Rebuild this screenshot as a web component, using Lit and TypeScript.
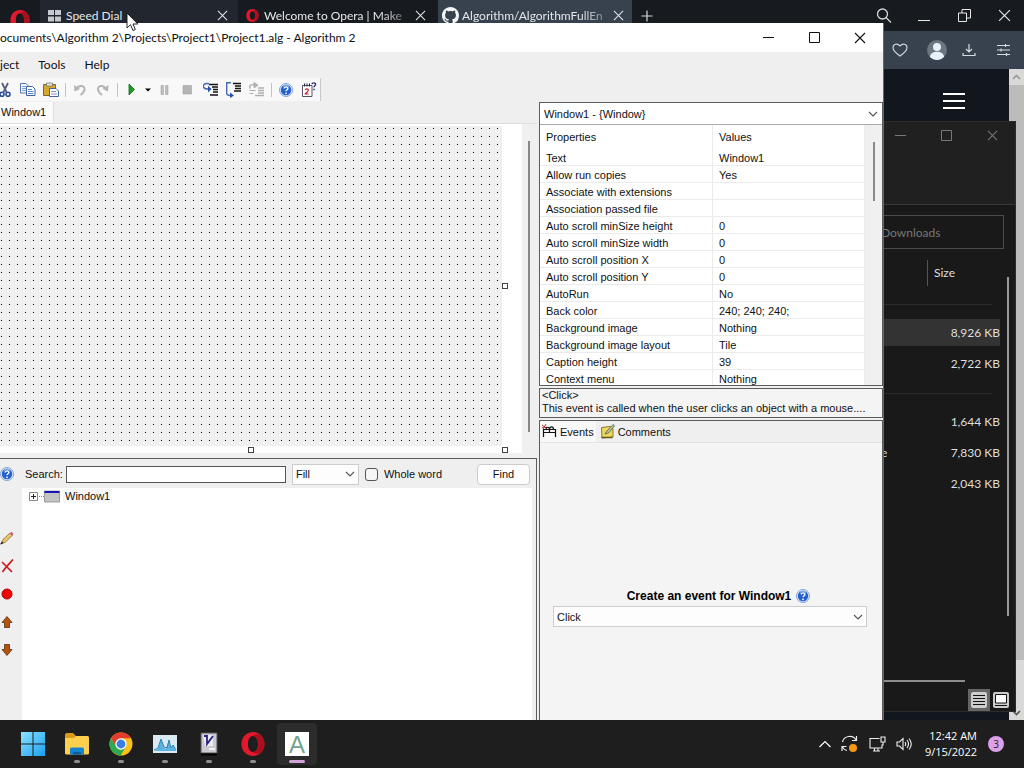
import { LitElement, html, css, nothing } from "lit";
import { customElement } from "lit/decorators.js";

const chevron = html`<svg class="chev" width="10" height="6" viewBox="0 0 10 6" fill="none" stroke="#555" stroke-width="1.1"><path d="M1 1l4 4 4-4" /></svg>`;

const cross = (size: number) => html`<svg width=${size} height=${size} viewBox="0 0 12 12" fill="none" stroke="currentColor" stroke-width="1.1"><path d="M1 1l10 10M11 1L1 11" /></svg>`;

const minimise = html`<svg width="11" height="11" viewBox="0 0 11 11"><path d="M0 5.5h11" stroke="currentColor" /></svg>`;
const maximise = html`<svg width="11" height="11" viewBox="0 0 11 11" fill="none" stroke="currentColor"><path d="M.5.5h10v10H.5z" /></svg>`;

const operaMark = (size: number) => html`<svg width=${size} height=${size} viewBox="0 0 24 24">
  <path fill="#e2182d" fill-rule="evenodd" d="M12 0C5.400 0 0.500 5.200 0.500 12S5.400 24 12 24s11.500-5.200 11.500-12S18.600 0 12 0zm0 4c2.900 0 5 3.400 5 8s-2.100 8-5 8-5-3.400-5-8 2.100-8 5-8z" />
  <path fill="#a8101f" d="M12 4c3 0 5 3.400 5 8s-2 8-5 8c2 2 5 2.500 7.500 1 2.500-2 4-5.400 4-9s-1.500-7-4-9C17 1.500 14 2 12 4z" />
</svg>`;

const helpIcon = html`<svg width="14" height="14" viewBox="0 0 14 14">
  <circle cx="7" cy="7" r="6.500" fill="#dfe9fb" stroke="#6c8fd0" stroke-width=".8" />
  <circle cx="7" cy="7" r="5.200" fill="#2560cf" />
  <path d="M4 3.500a4.500 4.500 0 0 1 6 0" stroke="#86b0f2" stroke-width="1.200" fill="none" />
  <path d="M5.200 5.600c0-2.300 3.800-2.200 3.700 0 0 1.200-1.800 1.200-1.900 2.600" stroke="#fff" stroke-width="1.400" fill="none" />
  <circle cx="7" cy="10.300" r=".9" fill="#fff" />
</svg>`;

const toolIcons: Record<string, unknown> = {
  cut: html`<svg width="16" height="16" viewBox="0 0 16 16" fill="none"><path d="M5 1l4.500 9M11 1L6.500 10" stroke="#55617c" stroke-width="1.800" /><circle cx="5" cy="12.300" r="2" stroke="#2c4c9b" stroke-width="1.600" /><circle cx="11" cy="12.300" r="2" stroke="#2c4c9b" stroke-width="1.600" /></svg>`,
  copy: html`<svg width="16" height="16" viewBox="0 0 16 16"><path d="M.5 1.500h5.500l2 2v7.500h-7.500z" fill="#f4f8ff" stroke="#5a78b4" /><path d="M2 4.500h4M2 6.500h4M2 8.500h4" stroke="#7fa0d8" /><path d="M6.500 4.500h6l2.500 2.500v6.500h-8.500z" fill="#fff" stroke="#40639f" /><path d="M8 7.500h4M8 9.500h5.500M8 11.500h5.500" stroke="#5a86cc" /></svg>`,
  paste: html`<svg width="16" height="16" viewBox="0 0 16 16"><path d="M.5 2.500h12v11H.5z" fill="#d7a82e" stroke="#7e6727" /><path d="M3.500 1h6v3h-6z" fill="#e9e5d2" stroke="#777" stroke-width=".8" /><path d="M6.500 6.500h6.500l2.500 2.500v5.500h-9z" fill="#fff" stroke="#4b64a0" /><path d="M8 9.500h5M8 12h6" stroke="#7391c8" /></svg>`,
  undo: html`<svg width="16" height="16" viewBox="0 0 16 16" fill="none"><path d="M4 7c3-4.500 9-3.500 8.500.5-.2 2.500-2 4-4 5.500" stroke="#b4b4b4" stroke-width="2" /><path d="M2 3l.5 6.500L8 7z" fill="#b4b4b4" /></svg>`,
  redo: html`<svg width="16" height="16" viewBox="0 0 16 16" fill="none"><path d="M11 7C8 2.500 2.500 3.500 3 7.500c.2 2.500 2 4 4 5.500" stroke="#b4b4b4" stroke-width="2" /><path d="M13.500 3L13 9.500 7.500 7z" fill="#b4b4b4" /></svg>`,
  run: html`<svg width="16" height="16" viewBox="0 0 16 16"><path d="M5 2l5.500 5.500L5 13z" fill="#1f9a2c" stroke="#0b6a16" stroke-width=".8" /></svg>`,
  pause: html`<svg width="16" height="16" viewBox="0 0 16 16"><path d="M4 3.500h2.500v9H4zM8.500 3.500H11v9H8.500z" fill="#bdbdbd" stroke="#a6a6a6" stroke-width=".6" /></svg>`,
  stop: html`<svg width="16" height="16" viewBox="0 0 16 16"><path d="M3 3.500h8.500V12H3z" fill="#b4b4b4" stroke="#a2a2a2" stroke-width=".6" /></svg>`,
  into: html`<svg width="16" height="16" viewBox="0 0 16 16" fill="none"><path d="M6 2.500h9M9 5h6M10 7.500h5M10 10h5M7 13h8" stroke="#111" stroke-width="1.300" /><path d="M6 1.800C1 .5-.3 3.500.7 5.500c1 1.500 3 1.500 5 1.500" stroke="#4a67b4" stroke-width="1.500" /><path d="M5 3.800L8.500 7 5 10.500z" fill="#2c4eaa" /></svg>`,
  over: html`<svg width="16" height="16" viewBox="0 0 16 16" fill="none"><path d="M7 1.500h8M9 4h6M9 6.500h6M8 9h7" stroke="#111" stroke-width="1.300" /><path d="M5 .8H.7V11c0 2 1.500 2.500 4 2.500" stroke="#4a67b4" stroke-width="1.400" /><path d="M4 10.500l4 3-4 2.500z" fill="#2c4eaa" /></svg>`,
  out: html`<svg width="16" height="16" viewBox="0 0 16 16" fill="none"><path d="M9 6h6M9 8.500h6M9 11h6M6 13.500h9" stroke="#b0b0b0" stroke-width="1.300" /><path d="M1.500 6.500C-.8 3 2.500 2 6 3" stroke="#b0b0b0" stroke-width="1.400" /><path d="M5 .5l4 2.700-4 2.700zM.5 8.500h6M.5 11.500h4" fill="#b0b0b0" stroke="#b0b0b0" /></svg>`,
  help: helpIcon,
  about: html`<svg width="16" height="16" viewBox="0 0 16 16" fill="none"><path d="M1.500 3.500h9.500v11H1.500z" fill="#fff" stroke="#556" /><path d="M3.500 1.500v3M6 1.500v3M8.500 1.500v3" stroke="#223" /><path d="M4.300 8.200c.3-2 3.400-1.700 3 .3-.2 1-2 2-3 3.500h3.400" stroke="#c2232d" stroke-width="1.200" /><path d="M11 2.200c.3-2 4-1.700 3.500.5-.3 1-1.500 1.200-1.500 2.600M13 6.800v1.400" stroke="#29327d" stroke-width="1.400" /></svg>`,
};

@customElement("opera-window")
class OperaWindow extends LitElement {
  static styles = css`
    :host { display: flex; flex-direction: column; background: #12161d; font: 12px/16px Lato, "Open Sans", sans-serif; color: #e4e6e9; }
    button { border: 0; background: none; padding: 0; color: inherit; display: grid; place-items: center; }
    .strip { display: flex; height: 31px; background: #171b1f; align-items: center; }
    .logo { width: 40px; padding: 10px 0 0; display: grid; justify-items: center; align-self: start; }
    .tab { display: flex; align-items: center; gap: 5px; width: 198px; height: 31px; padding: 0 10px 0 8px; box-sizing: border-box; }
    .tab.second { background: none; width: 200px; padding-right: 12px; }
    .tab.first { background: #22272f; }
    .tab.current { background: #37424e; width: 194px; padding: 0 8px 0 4px; gap: 3px; }
    .tab a { flex: 1; min-width: 0; color: inherit; text-decoration: none; white-space: nowrap; overflow: hidden; }
    .second a, .current a { mask-image: linear-gradient(90deg, #000 80%, rgba(0, 0, 0, .25)); }
    .plus { width: 30px; height: 31px; }
    .gap { flex: 1; }
    .sys { width: 40px; height: 31px; }
    .bar { display: flex; height: 38px; background: #37424e; justify-content: flex-end; align-items: center; gap: 12px; padding: 0 12px 0 0; }
    .view { flex: 1; display: flex; justify-content: flex-end; }
    .menu { width: 30px; height: 24px; margin: 20px 40px 0 0; }
    .scroll { width: 15px; background: #d9d9d9; display: flex; flex-direction: column; align-items: center; }
    .scroll svg { margin: 5px 0; }
    .thumb { background: #bcbcbc; align-self: stretch; flex: 1; }
    .foot { height: 60px; display: flex; align-items: flex-end; }
    .foot svg { margin: 0 0 4px; }
  `;
  render() {
    return html`
      <div class="strip">
        <div class="logo">${operaMark(20)}</div>
        <div class="tab first">
          <svg width="13" height="12" viewBox="0 0 13 12" fill="#c5c8cc"><path d="M0 0h6v5H0zM7 0h6v5H7zM0 6.500h6v5H0zM7 6.500h6v5H7z" /></svg>
          <a href="#speed">Speed Dial</a>
          <button aria-label="Close tab">${cross(11)}</button>
        </div>
        <div class="tab second">
          ${operaMark(13)}<a href="#welcome">Welcome to Opera | Make</a>
          <button aria-label="Close tab">${cross(11)}</button>
        </div>
        <div class="tab current">
          <svg width="17" height="17" viewBox="0 0 16 16" fill="#f4f6f8"><path d="M8 0C3.580 0 0 3.580 0 8c0 3.540 2.290 6.530 5.470 7.590.4.070.55-.17.55-.38 0-.19-.01-.82-.01-1.490-2.010.37-2.530-.49-2.690-.94-.09-.23-.48-.94-.82-1.130-.28-.15-.68-.52-.01-.53.63-.01 1.080.58 1.230.82.72 1.210 1.870.87 2.330.66.07-.52.28-.87.51-1.070-1.780-.2-3.640-.89-3.640-3.950 0-.87.31-1.590.82-2.150-.08-.2-.36-1.020.08-2.120 0 0 .67-.21 2.200.82.64-.18 1.320-.27 2-.27s1.360.09 2 .27c1.530-1.040 2.200-.82 2.200-.82.44 1.100.16 1.920.08 2.120.51.56.82 1.270.82 2.150 0 3.070-1.870 3.750-3.650 3.950.29.25.54.73.54 1.480 0 1.070-.01 1.930-.01 2.200 0 .21.15.46.55.38A8.010 8.010 0 0 0 16 8c0-4.420-3.580-8-8-8z" /></svg>
          <a href="#repo">Algorithm/AlgorithmFullEn</a>
          <button aria-label="Close tab">${cross(11)}</button>
        </div>
        <button class="plus" aria-label="New tab"><svg width="12" height="12" viewBox="0 0 12 12"><path d="M6 .5v11M.5 6h11" stroke="#d5d8db" stroke-width="1.200" /></svg></button>
        <span class="gap"></span>
        <button class="sys" aria-label="Search tabs"><svg width="16" height="16" viewBox="0 0 16 16" fill="none" stroke="#d5d8db" stroke-width="1.300"><circle cx="6.500" cy="6" r="5" /><path d="M10 9.500l5 5" /></svg></button>
        <button class="sys" aria-label="Minimise"><svg width="12" height="12" viewBox="0 0 12 12"><path d="M0 10.500h12" stroke="#e8e8e8" /></svg></button>
        <button class="sys" aria-label="Restore"><svg width="13" height="13" viewBox="0 0 13 13" fill="none" stroke="#e8e8e8"><path d="M.5 4h8v8.500h-8zM4 4V.5h8.500V9H8.500" /></svg></button>
        <button class="sys" aria-label="Close">${cross(13)}</button>
      </div>
      <div class="bar">
        <button aria-label="Favourite"><svg width="16" height="14" viewBox="0 0 16 14" fill="none" stroke="#cfd4da" stroke-width="1.200"><path d="M8 13C3 9.500 1 7 1 4.500 1 1 5.500-.2 8 3c2.500-3.200 7-2 7 1.500 0 2.500-2 5-7 8.500z" /></svg></button>
        <button aria-label="Profile"><svg width="30" height="20" viewBox="0 0 30 20"><circle cx="17" cy="10" r="10" fill="#6c7681" /><circle cx="17" cy="7" r="4" fill="#e8f1fb" /><path d="M10 17c0-7 14-7 14 0-4 4-10 4-14 0z" fill="#e8f1fb" /></svg></button>
        <button aria-label="Downloads"><svg width="14" height="14" viewBox="0 0 14 14" fill="none" stroke="#d5dade" stroke-width="1.200"><path d="M7 1v8M4 6l3 3 3-3M1 10v2.500h12V10" /></svg></button>
        <button aria-label="Easy setup"><svg width="24" height="14" viewBox="0 0 24 14" fill="none" stroke="#d5dade" stroke-width="1.200"><path d="M9 2.500h13M9 7h13M9 11.500h13M17.500 1v3M13 5.500v3M18.500 10v3" /></svg></button>
      </div>
      <div class="view">
        <button class="menu" aria-label="Menu"><svg width="22" height="16" viewBox="0 0 22 16"><path d="M0 1h22M0 8h22M0 15h22" stroke="#fff" stroke-width="2" /></svg></button>
        <div class="scroll">
          <svg width="9" height="6" viewBox="0 0 9 6" fill="none" stroke="#999" stroke-width="1.600"><path d="M1 5l3.500-3.500L8 5" /></svg>
          <div class="thumb"></div>
          <div class="foot"><svg width="9" height="6" viewBox="0 0 9 6" fill="none" stroke="#555" stroke-width="1.600"><path d="M1 1l3.500 3.500L8 1" /></svg></div>
        </div>
      </div>`;
  }
}

@customElement("explorer-window")
class ExplorerWindow extends LitElement {
  static styles = css`
    :host { display: flex; flex-direction: column; box-sizing: border-box; background: #191919; border: 1px solid #2c2c2c; border-left: 0; font: 12px/17px Lato, "Open Sans", sans-serif; color: #dedede; }
    button { border: 0; background: none; padding: 0; color: #777; display: grid; place-items: center; }
    .head { background: #202020; height: 82px; border-bottom: 1px solid #393939; display: flex; justify-content: flex-end; align-items: flex-start; }
    .head button { width: 46px; height: 27px; }
    .find { margin: 10px 11px 0 0; padding: 0 0 0 56px; height: 34px; background: none; border: 1px solid #4b4b4b; border-radius: 0; font: inherit; color: #777; box-sizing: border-box; }
    .find::placeholder { color: #777; opacity: 1; }
    .list { flex: 1; display: flex; min-height: 0; margin: 11px 6px 0 0; }
    table { flex: 1; border-collapse: collapse; align-self: flex-start; table-layout: fixed; }
    th { font-weight: 400; text-align: left; padding: 4px 0 5px 6px; border-left: 1px solid #555; }
    th:first-child { border: 0; }
    td { padding: 7px 0; height: 17px; text-align: right; }
    td:first-child { text-align: left; padding-left: 57px; }
    .size { width: 66px; }
    .picked td { background: #333; padding: 5px 0; }
    .picked + tr td { padding-top: 9px; }
    .rule td { padding: 0; height: 1px; }
    .line { height: 1px; margin: 14px 8px 12px 0; background: #2c2c2c; }
    .line.top { margin: 18px 8px 14px 0; }
    .track { width: 2px; margin: 17px 0 64px 7px; background: #9a9a9a; }
    .hbar { height: 2px; background: #8d8d8d; margin: 0 50px 7px 0; }
    .modes { display: flex; justify-content: flex-end; align-items: center; gap: 3px; padding: 0 6px 0 0; }
    .modes .on { width: 22px; height: 22px; background: #666; }
  `;
  render() {
    const row = (name: string, size: string, cls = "") => html`<tr class=${cls}><td>${name}</td><td>${size}</td></tr>`;
    const rule = (cls: string) => html`<tr class="rule"><td colspan="2"><div class="line ${cls}"></div></td></tr>`;
    return html`
      <div class="head">
        <button aria-label="Minimise">${minimise}</button>
        <button aria-label="Maximise">${maximise}</button>
        <button aria-label="Close">${cross(11)}</button>
      </div>
      <input class="find" type="search" aria-label="Search Downloads" placeholder="Downloads" />
      <div class="list">
        <table>
          <thead><tr><th></th><th class="size">Size</th></tr></thead>
          <tbody>
            ${rule("top")}
            ${row("", "8,926 KB", "picked")} ${row("", "2,722 KB")}
            ${rule("")}
            ${row("", "1,644 KB")} ${row("e", "7,830 KB")} ${row("", "2,043 KB")}
          </tbody>
        </table>
        <div class="track"></div>
      </div>
      <div class="hbar"></div>
      <div class="modes">
        <button class="on" aria-label="Details"><svg width="16" height="16" viewBox="0 0 16 16"><rect width="16" height="16" rx="2" fill="#ccc" /><path d="M2 3.500h12M2 6.500h12M2 9.500h12M2 12.500h12" stroke="#111" /></svg></button>
        <button aria-label="Large icons"><svg width="16" height="16" viewBox="0 0 16 16"><rect width="16" height="16" rx="2" fill="#ccc" /><path d="M2.500 2.500h11v8.500h-11z" fill="#fff" stroke="#111" /><path d="M2 13.500h12" stroke="#111" /></svg></button>
      </div>`;
  }
}

@customElement("algorithm-window")
class AlgorithmWindow extends LitElement {
  static styles = css`
    :host { display: flex; flex-direction: column; background: #efefef; border-right: 1px solid #666; box-sizing: border-box; color: #111; font: 11px/14px "Liberation Sans", Arial, sans-serif; overflow: hidden; }
    button, select, input { font: inherit; color: inherit; }
    button { border: 0; background: none; padding: 0; }
    .title { display: flex; height: 29px; background: #fff; align-items: center; font: 12px/16px Lato, "Open Sans", sans-serif; }
    .title span { flex: 1; white-space: nowrap; overflow: hidden; }
    .title button { width: 46px; height: 29px; display: grid; place-items: center; }
    .menus { display: flex; gap: 19px; height: 26px; align-items: center; font: 12px/16px Lato, "Open Sans", sans-serif; }
    .tools { display: flex; align-items: center; align-self: flex-start; height: 23px; background: #f8f8f8; border-right: 1px solid #c9c9c9; }
    .tools button { width: 23px; height: 23px; display: grid; place-items: center; }
    .tools button.drop { width: 10px; }
    .tools button:first-child { margin-left: -7px; }
    .sep { width: 6px; height: 14px; background: linear-gradient(90deg, transparent 3px, #c4c4c4 3px, #c4c4c4 4px, transparent 4px); }
    .work { flex: 1; display: grid; grid-template-columns: minmax(0, 1fr) 344px; gap: 2px; min-height: 0; }
    .left, .right { display: flex; flex-direction: column; min-height: 0; }
    .right { margin-top: 1px; gap: 2px; }
    .doc { align-self: flex-start; height: 21px; margin-top: 1px; padding: 0 7px 2px 1px; background: #fafafa; border-right: 1px solid #ddd; }
    .design { height: 335px; box-sizing: border-box; display: flex; background: #fff; border-top: 1px solid #ddd; border-bottom: 5px solid #f0f0f0; }
    .form { position: relative; flex: 1; margin: 2px 20px 7px 0; }
    .form svg { display: block; width: 100%; height: 100%; }
    .handle { position: absolute; width: 4px; height: 4px; border: 1px solid #444; background: #fff; }
    .handle.e { right: -6px; top: 50%; margin-top: -3px; }
    .handle.s { left: 50%; bottom: -7px; margin-left: -3px; }
    .handle.se { right: -6px; bottom: -7px; }
    .lane { width: 15px; background: #f0f0f0; display: flex; }
    .lane i { width: 2px; margin: 17px 0 21px 6px; background: #888; }
    .finder { flex: 1; display: flex; border: solid #5c5c5c; border-width: 1px 1px 0 0; min-height: 0; }
    .side { width: 22px; display: flex; flex-direction: column; align-items: flex-start; }
    .side button { width: 14px; height: 28px; display: grid; place-items: center; }
    .side button:first-child { margin: 1px 0 36px; }
    .main { flex: 1; display: flex; flex-direction: column; margin-right: 4px; min-width: 0; }
    .search { display: flex; height: 29px; align-items: center; padding: 1px 2px 0 3px; box-sizing: border-box; }
    .search > label { margin-right: 3px; }
    .text { flex: 1; min-width: 0; height: 17px; border: 1px solid #555; padding: 0 3px; box-sizing: border-box; margin-right: 6px; background: #fff; }
    .pick { display: grid; align-items: center; }
    .pick select { grid-area: 1 / 1; appearance: none; border: 1px solid #ccc; background: #fdfdfd; height: 21px; padding: 0 20px 0 3px; border-radius: 0; width: 100%; }
    .pick .chev { grid-area: 1 / 1; justify-self: end; margin-right: 4px; pointer-events: none; }
    .pick.mode { width: 67px; margin-right: 6px; }
    .search .whole { display: flex; align-items: center; gap: 6px; margin-right: 35px; }
    .whole input { appearance: none; width: 13px; height: 13px; margin: 0; border: 1px solid #555; border-radius: 3px; background: #f6f6f6; box-sizing: border-box; }
    .search .find { width: 53px; height: 21px; background: #fdfdfd; border: 1px solid #ccc; border-radius: 4px; }
    .tree { flex: 1; margin: 0; padding: 1px 0 0 7px; list-style: none; background: #fff; }
    .tree li { display: flex; align-items: center; height: 14px; }
    .tree svg { margin-right: 3px; }
    .tree a { color: inherit; text-decoration: none; background: #f7f7f7; padding: 0 2px; }
    .panel { border: 1px solid #5c5c5c; box-sizing: border-box; background: #f4f4f4; }
    .props { height: 284px; display: flex; flex-direction: column; background: #fff; }
    .props .pick select { border-width: 0 0 1px; border-color: #aaa; background: #fff; height: 22px; padding-left: 4px; }
    .sheet { flex: 1; display: flex; overflow: hidden; }
    .scroll { flex: 1; overflow: hidden; }
    table { width: 100%; border-collapse: separate; border-spacing: 0; table-layout: fixed; }
    th, td { padding: 0 0 0 6px; text-align: left; font-weight: 400; white-space: nowrap; border-right: 1px solid #ebebeb; }
    th { height: 24px; }
    td { height: 16px; border-bottom: 1px solid #ebebeb; vertical-align: bottom; }
    .name { width: 166px; }
    .sheet .lane { width: 17px; }
    .sheet .lane i { height: 59px; margin: 17px 0 0 8px; }
    .hint { height: 30px; padding: 0 2px; line-height: 13px; white-space: nowrap; overflow: hidden; }
    .hint p { margin: 0; }
    .events { flex: 1; border-bottom: 0; display: flex; flex-direction: column; min-height: 0; }
    .tabs { display: flex; height: 21px; gap: 2px; border-bottom: 1px solid #e2e2e2; background: #efefef; }
    .tabs button { display: flex; align-items: center; gap: 3px; padding: 0 2px; }
    .tabs .on { background: #f8f8f8; }
    .create { flex: 1; display: flex; flex-direction: column; justify-content: flex-end; padding: 0 15px 93px 13px; }
    .create label { display: flex; justify-content: center; align-items: center; gap: 5px; font-weight: 700; color: #000; margin: 0 0 2px; padding-left: 17px; height: 16px; font-size: 12px; }
  `;

  rows = [
    ["Text", "Window1"], ["Allow run copies", "Yes"], ["Associate with extensions", ""], ["Association passed file", ""],
    ["Auto scroll minSize height", "0"], ["Auto scroll minSize width", "0"], ["Auto scroll position X", "0"], ["Auto scroll position Y", "0"],
    ["AutoRun", "No"], ["Back color", "240; 240; 240;"], ["Background image", "Nothing"], ["Background image layout", "Tile"],
    ["Caption height", "39"], ["Context menu", "Nothing"],
  ];

  tool(name: string) {
    return name === "|" ? html`<span class="sep"></span>` : html`<button aria-label=${name}>${toolIcons[name]}</button>`;
  }

  render() {
    return html`
      <div class="title">
        <span>ocuments\\Algorithm 2\\Projects\\Project1\\Project1.alg - Algorithm 2</span>
        <button aria-label="Minimise">${minimise}</button>
        <button aria-label="Maximise">${maximise}</button>
        <button aria-label="Close">${cross(12)}</button>
      </div>
      <nav class="menus"><button>ject</button><button>Tools</button><button>Help</button></nav>
      <div class="tools">
        ${["cut", "copy", "paste", "|", "undo", "redo", "|", "run"].map((t) => this.tool(t))}
        <button class="drop" aria-label="Run options"><svg width="6" height="4" viewBox="0 0 6 4"><path d="M0 .5h6L3 3.500z" fill="#000" /></svg></button>
        ${["pause", "stop", "into", "over", "out", "|", "help", "about"].map((t) => this.tool(t))}
      </div>
      <div class="work">
        <div class="left">
          <button class="doc">Window1</button>
          <div class="design">
            <div class="form">
              <svg><defs><pattern id="grid" width="8" height="8" patternUnits="userSpaceOnUse"><rect x="1" y="2" width="1" height="1" fill="#000" /></pattern></defs><rect width="100%" height="100%" fill="#f0f0f0" /><rect width="100%" height="100%" fill="url(#grid)" /></svg>
              <span class="handle e"></span><span class="handle s"></span><span class="handle se"></span>
            </div>
            <div class="lane"><i></i></div>
          </div>
          <div class="finder">
            <div class="side">
              <button aria-label="Help">${helpIcon}</button>
              <button aria-label="Edit"><svg width="14" height="14" viewBox="0 0 14 14"><path d="M1 13l2-4.500L10 2l2.500 2.200L5.500 11z" fill="#e8c666" stroke="#8a7434" stroke-width=".8" /><path d="M9.500 2.500L11.500.8 13.500 3 12 4.800z" fill="#d05c8c" /><path d="M0 13.500l2-3 1.500 1.700z" fill="#222" /></svg></button>
              <button aria-label="Delete"><svg width="14" height="14" viewBox="0 0 14 14" fill="none"><path d="M2 3c3 3 7 7 10 10M13 .5C9 5 5 9 2.500 13" stroke="#cf1b1f" stroke-width="1.700" /></svg></button>
              <button aria-label="Breakpoint"><svg width="12" height="12" viewBox="0 0 12 12"><circle cx="6" cy="6" r="5" fill="#ee0606" stroke="#b50000" /></svg></button>
              <button aria-label="Up"><svg width="12" height="12" viewBox="0 0 12 12"><path d="M6 .5l5 6H8.500v5h-5v-5H1z" fill="#b4520f" stroke="#60300e" stroke-width=".8" /></svg></button>
              <button aria-label="Down"><svg width="12" height="12" viewBox="0 0 12 12"><path d="M6 11.500l5-6H8.500v-5h-5v5H1z" fill="#b4520f" stroke="#60300e" stroke-width=".8" /></svg></button>
            </div>
            <div class="main">
              <div class="search">
                <label for="q">Search:</label><input id="q" class="text" type="text" />
                <div class="pick mode"><select aria-label="Search mode"><option>Fill</option></select>${chevron}</div>
                <label class="whole"><input type="checkbox" />Whole word</label>
                <button class="find">Find</button>
              </div>
              <ul class="tree">
                <li>
                  <svg width="31" height="13" viewBox="0 0 31 13"><path d="M.5 2.500h8v8h-8z" fill="#fff" stroke="#888" /><path d="M2 6.500h5M4.500 4v5" stroke="#222" /><path d="M10 6.500h5" stroke="#888" stroke-dasharray="1 1" /><path d="M15.500 1h15v11h-15z" fill="#c4c4c4" stroke="#888" stroke-width=".8" /><path d="M15.500 1h15v2h-15z" fill="#1414b8" /></svg>
                  <a href="#window1">Window1</a>
                </li>
              </ul>
            </div>
          </div>
        </div>
        <div class="right">
          <section class="panel props">
            <div class="pick"><select aria-label="Object"><option>Window1 - {Window}</option></select>${chevron}</div>
            <div class="sheet">
              <div class="scroll">
                <table>
                  <thead><tr><th class="name">Properties</th><th>Values</th></tr></thead>
                  <tbody>${this.rows.map(([k, v]) => html`<tr><td>${k}</td><td>${v || nothing}</td></tr>`)}</tbody>
                </table>
              </div>
              <div class="lane"><i></i></div>
            </div>
          </section>
          <section class="panel hint"><p>&lt;Click&gt;</p><p>This event is called when the user clicks an object with a mouse....</p></section>
          <section class="panel events">
            <div class="tabs">
              <button class="on"><svg width="15" height="15" viewBox="0 0 15 15" fill="none"><path d="M0 1l4 3M4 0L1 5M0 3.500h5" stroke="#c33" /><path d="M1.500 13V5.500h12V13M1.500 8.500h12M4 5.500c0-3 3.500-3 3.500 0 0-3.500 4-3.500 4 0M7.500 5.500v3" stroke="#111" stroke-width="1.200" /></svg>Events</button>
              <button><svg width="15" height="15" viewBox="0 0 15 15"><path d="M1.500 3.500L10 2.500l3 2v8.500l-11 1z" fill="#ecd85c" stroke="#8b7a24" /><path d="M1.500 13.500h11" stroke="#665b22" stroke-width="1.500" /><path d="M5 10l2-3 6-6.500 1.500 1.300L8.500 9z" fill="#b9c9a0" stroke="#555" stroke-width=".8" /></svg>Comments</button>
            </div>
            <div class="create">
              <label for="ev">Create an event for Window1 ${helpIcon}</label>
              <div class="pick"><select id="ev"><option>Click</option></select>${chevron}</div>
            </div>
          </section>
        </div>
      </div>`;
  }
}

@customElement("task-bar")
class TaskBar extends LitElement {
  static styles = css`
    :host { display: flex; height: 48px; padding: 0 20px 0 13px; background: #1e1e1e; color: #fff; font: 11px/16px "Open Sans", "Noto Sans", sans-serif; align-items: center; }
    .apps { display: flex; gap: 4px; flex: 1; }
    button { border: 0; padding: 0; background: none; color: inherit; font: inherit; }
    .app { width: 40px; height: 42px; display: grid; grid-template-rows: 1fr 3px; justify-items: center; align-items: center; border-radius: 4px; box-sizing: border-box; padding: 4px 0 2px; }
    .app i { width: 6px; height: 3px; border-radius: 2px; background: #8f8f8f; }
    .app:first-child i { visibility: hidden; }
    .app.on { background: #2c2c2c; }
    .app.on i { width: 16px; background: #cfa6d6; }
    .letter { width: 24px; height: 24px; background: #fff; color: #74a48d; font: 24px/25px "Liberation Sans", Arial, sans-serif; text-align: center; }
    .tray { display: flex; align-items: center; gap: 10px; }
    .tray button { display: grid; place-items: center; }
    .tray .clock { text-align: right; display: block; white-space: pre-line; margin: 0 1px 0 2px; }
    .badge { width: 16px; height: 16px; border-radius: 8px; background: #dba0e8; color: #222; font-size: 10px; line-height: 16px; text-align: center; }
  `;
  render() {
    const apps: [string, unknown][] = [
      ["Start", html`<svg width="24" height="24" viewBox="0 0 24 24"><defs><linearGradient id="w" x2="1" y2="1"><stop stop-color="#8be2ff" /><stop offset="1" stop-color="#1aa0ee" /></linearGradient></defs><path d="M0 0h11.500v11.500H0zM12.500 0H24v11.500H12.500zM0 12.500h11.500V24H0zM12.500 12.500H24V24H12.500z" fill="url(#w)" /></svg>`],
      ["File Explorer", html`<svg width="26" height="24" viewBox="0 0 26 24"><path d="M1 3q0-2 2-2h6l3 3h11q2 0 2 2v14H1z" fill="#d99b18" /><path d="M1 6h9l2-2h11q2 0 2 2v15q0 1.500-1.500 1.500h-21Q1 22.500 1 21z" fill="#ffd04e" /><path d="M6 22.500V17q0-1.500 1.500-1.500h11q1.500 0 1.500 1.500v5.500z" fill="#1583cf" /><path d="M9 20h8v2.500H9z" fill="#0c5d9c" /></svg>`],
      ["Chrome", html`<svg width="24" height="24" viewBox="0 0 24 24"><circle cx="12" cy="12" r="11.500" fill="#fbc116" /><path d="M2 6.200A11.500 11.500 0 0 1 22 6.200H12L7.200 14.800z" fill="#e33b2e" /><path d="M2 6.200A11.500 11.500 0 0 0 11.500 23.500L16.800 15 12 17.500 7.200 14.800z" fill="#2da94f" /><circle cx="12" cy="12" r="5.700" fill="#fff" /><circle cx="12" cy="12" r="4.400" fill="#3b7de8" /></svg>`],
      ["Performance", html`<svg width="24" height="18" viewBox="0 0 24 18"><path d="M0 0h24v18H0z" fill="#d9eaf3" /><path d="M1 16l4-2 3-10 3 9 2 1 3-9 2 9 2-4 3 6z" fill="#5ab2df" /><path d="M1 15l4-2 3-9 3 8 3 1 2-8 2 8 2-3 3 5" fill="none" stroke="#2b82b5" /></svg>`],
      ["Installer", html`<svg width="18" height="24" viewBox="0 0 18 24"><path d="M1 1h16v20H1z" fill="#c9c9cf" stroke="#555" /><path d="M3 3h10v11H5z" fill="#ecebf5" /><path d="M4 4h3v8l6-8" fill="none" stroke="#2a2383" stroke-width="1.800" /><path d="M9 17h6" stroke="#fff" stroke-width="1.500" /><path d="M1 22.500h16" stroke="#000" stroke-width="2" /></svg>`],
      ["Opera", operaMark(24)],
      ["Algorithm", html`<span class="letter">A</span>`],
    ];
    return html`
      <div class="apps">${apps.map(([n, icon]) => html`<button class="app ${n === "Algorithm" ? "on" : ""}" aria-label=${n}>${icon}<i></i></button>`)}</div>
      <div class="tray">
        <button aria-label="Hidden icons"><svg width="12" height="8" viewBox="0 0 12 8" fill="none" stroke="#fff" stroke-width="1.200"><path d="M.5 7L6 1.500 11.500 7" /></svg></button>
        <button aria-label="Updates"><svg width="18" height="18" viewBox="0 0 18 18" fill="none" stroke="#eee" stroke-width="1.200"><path d="M1.500 7C3 .5 12-.5 15 5M15.500 1v4.500H11M6 15.500C3.500 15 2 13.500 1.500 11M1 16v-4.500h4.500" /><circle cx="12" cy="13" r="4" fill="#f49a12" stroke="none" /></svg></button>
        <button aria-label="Network"><svg width="17" height="16" viewBox="0 0 17 16" fill="none" stroke="#eee" stroke-width="1.100"><path d="M10.500 2.500H1v9.500h12V8.500M4 15h7M5.500 12v3M9 12v3M12 1h4v5h-4zM14 6v3.500" /></svg></button>
        <button aria-label="Volume"><svg width="17" height="14" viewBox="0 0 17 14" fill="none" stroke="#eee" stroke-width="1.100"><path d="M1 5h2.500L7 1.500v11L3.500 9H1zM9 5q1.500 2 0 4M11 3q3 4 0 8M13 1.500q4.500 5.500 0 11" /></svg></button>
        <button class="clock">12:42 AM
9/15/2022</button>
        <span class="badge">3</span>
      </div>`;
  }
}

@customElement("app-root")
class AppRoot extends LitElement {
  static styles = css`
    :host { display: flex; flex-direction: column; height: 100vh; overflow: hidden; background: #0c1013; }
    .desk { position: relative; flex: 1; min-height: 0; overflow: hidden; }
    opera-window { position: absolute; inset: 0; }
    explorer-window { position: absolute; top: 121px; right: 8px; bottom: 8px; width: 192px; }
    algorithm-window { position: absolute; top: 23px; left: 0; right: 140px; bottom: 0; }
    .pointer { position: absolute; left: 126px; top: 12px; }
  `;
  render() {
    return html`
      <div class="desk">
        <opera-window></opera-window>
        <explorer-window></explorer-window>
        <algorithm-window></algorithm-window>
        <svg class="pointer" width="13" height="20" viewBox="0 0 13 20"><path d="M1 1v15l3.500-3.300L7 18.500l2.300-1L7 12h4.800z" fill="#fff" stroke="#111" stroke-width=".9" /></svg>
      </div>
      <task-bar></task-bar>`;
  }
}
